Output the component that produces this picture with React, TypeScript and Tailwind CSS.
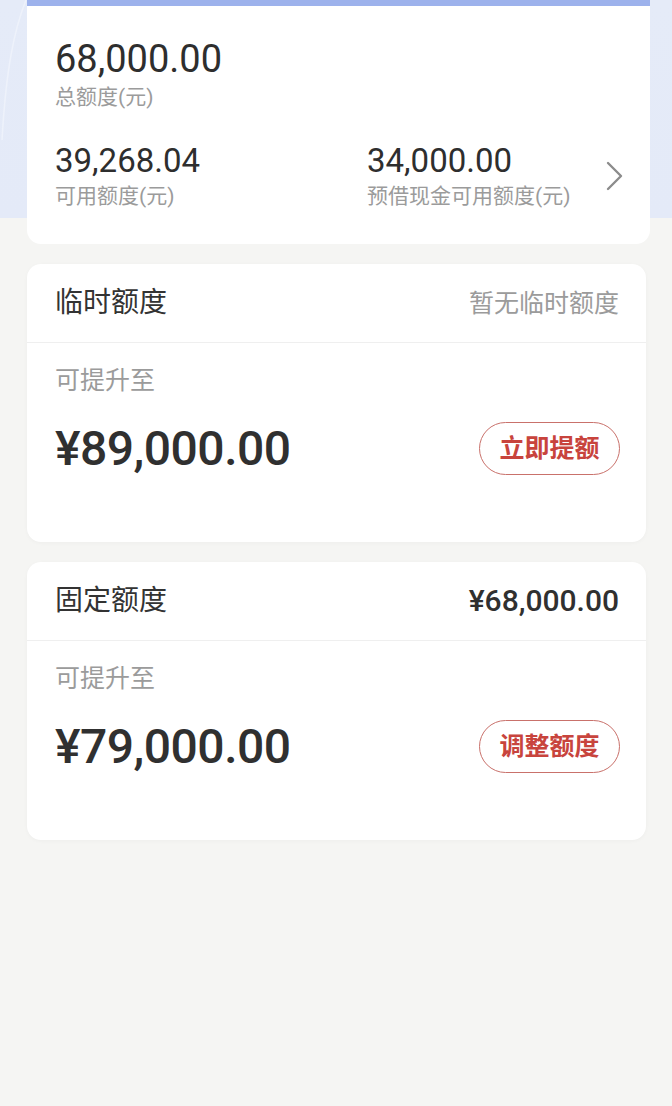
import React from "react";

const font = { fontFamily: 'Roboto, "Noto Sans CJK SC", sans-serif' };

const Chevron = () => (
  <svg width="18" height="30" viewBox="0 0 18 30" fill="none" className="text-[#8c8c8c] ml-[2px]">
    <path d="M2 2 L15 15 L2 28" stroke="currentColor" strokeWidth="2.4" strokeLinecap="round" strokeLinejoin="round" />
  </svg>
);

const QuotaCard = ({
  title,
  right,
  rightClass,
  amount,
  action,
}: {
  title: string;
  right: string;
  rightClass: string;
  amount: string;
  action: string;
}) => (
  <div className="mt-[20px] ml-[27px] mr-[26px] bg-white rounded-[14px] shadow-[0_1px_4px_rgba(0,0,0,0.03)]">
    <div className="h-[79px] pl-[28px] pr-[27px] flex items-center justify-between border-b border-[#efefef]">
      <span className="text-[28px] leading-none text-[#333333]">{title}</span>
      <span className={rightClass}>{right}</span>
    </div>
    <div className="pl-[28px] pr-[26px] pt-[25px] pb-[67px]">
      <div className="text-[25px] leading-none text-[#9b9b9b]">可提升至</div>
      <div className="mt-[29px] h-[53px] flex items-center justify-between">
        <span className="text-[48px] leading-none font-medium tracking-[-0.5px] text-[#303030]">{amount}</span>
        <button className="w-[141px] h-[53px] rounded-full border border-[#c9716b] text-[25px] leading-none font-semibold text-[#c8443d] flex items-center justify-center">
          {action}
        </button>
      </div>
    </div>
  </div>
);

export default function App() {
  return (
    <div
      style={font}
      className="relative min-h-screen w-full bg-[linear-gradient(to_bottom,#e5ebf8_0px,#e4eaf8_218px,#f5f5f3_218px)] pb-10"
    >
      <svg className="absolute left-0 top-0" width="40" height="140" viewBox="0 0 40 140" fill="none">
        <path d="M26 0 C 14 30, 6 70, 2 140" stroke="#eef2fb" strokeWidth="1.5" />
      </svg>
      <div className="relative ml-[27px] mr-[22px] bg-white rounded-b-[14px] overflow-hidden">
        <div className="h-[6px] bg-[#9db2ec]" />
        <div className="pl-[28px] pr-[26px] pt-[34px] pb-[37px]">
          <div className="text-[38px] leading-none text-[#2e2e2e]">68,000.00</div>
          <div className="mt-[9px] text-[21px] leading-none text-[#9b9b9b]">总额度(元)</div>
          <div className="mt-[36px] flex items-center">
            <div className="w-[312px]">
              <div className="text-[33px] leading-none text-[#2e2e2e]">39,268.04</div>
              <div className="mt-[9px] text-[21px] leading-none text-[#9b9b9b]">可用额度(元)</div>
            </div>
            <div className="flex-1">
              <div className="text-[33px] leading-none text-[#2e2e2e]">34,000.00</div>
              <div className="mt-[9px] text-[21px] leading-none text-[#9b9b9b] whitespace-nowrap">预借现金可用额度(元)</div>
            </div>
            <Chevron />
          </div>
        </div>
      </div>
      <QuotaCard
        title="临时额度"
        right="暂无临时额度"
        rightClass="text-[25px] leading-none text-[#9b9b9b]"
        amount="¥89,000.00"
        action="立即提额"
      />
      <QuotaCard
        title="固定额度"
        right="¥68,000.00"
        rightClass="text-[30px] leading-none font-medium text-[#303030]"
        amount="¥79,000.00"
        action="调整额度"
      />
    </div>
  );
}
